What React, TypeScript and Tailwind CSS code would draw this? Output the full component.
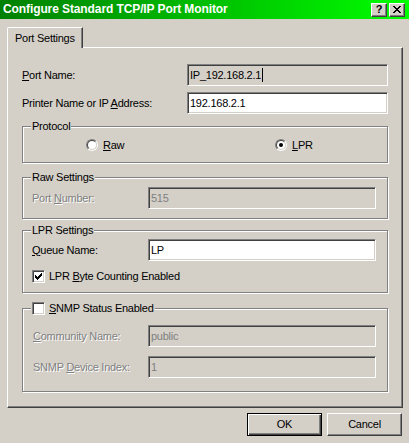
import { ReactNode } from "react";
import clsx from "clsx";

const sunken =
  "border border-t-[#808080] border-l-[#808080] border-r-white border-b-white shadow-[inset_1px_1px_0_#404040,inset_-1px_-1px_0_#d4d0c8]";
const raised =
  "border border-t-white border-l-white border-r-[#404040] border-b-[#404040] shadow-[inset_-1px_-1px_0_#808080]";
const disabledText = "text-[#808080] [text-shadow:1px_1px_0_#fff]";

function Key({ children }: { children: ReactNode }) {
  return <span className="underline underline-offset-[1px] decoration-[1px]">{children}</span>;
}

function Field({
  value,
  width,
  white,
  disabled,
  caret,
}: {
  value: string;
  width: string;
  white?: boolean;
  disabled?: boolean;
  caret?: boolean;
}) {
  return (
    <div
      className={clsx(
        sunken,
        width,
        "h-[22px] flex items-center pl-[2px]",
        white ? "bg-white" : "bg-[#d4d0c8]",
        disabled ? "text-[#808080]" : "text-black"
      )}
    >
      <span>{value}</span>
      {caret && <span className="ml-[1px] w-[1px] h-[14px] bg-black" />}
    </div>
  );
}

function Group({ label, className, children }: { label: ReactNode; className?: string; children?: ReactNode }) {
  return (
    <div className={clsx("relative border border-[#808080] shadow-[inset_1px_1px_0_#fff,1px_1px_0_#fff]", className)}>
      <div className="absolute left-[8px] -top-[7px] h-[13px] bg-[#d4d0c8] px-[1px] flex items-center gap-[4px]">
        {label}
      </div>
      {children}
    </div>
  );
}

function Radio({ checked }: { checked?: boolean }) {
  return (
    <span className="relative inline-block w-[12px] h-[12px] rounded-full border border-t-[#808080] border-l-[#808080] border-r-white border-b-white">
      <span className="absolute inset-0 rounded-full border border-t-[#404040] border-l-[#404040] border-r-[#d4d0c8] border-b-[#d4d0c8] bg-white flex items-center justify-center">
        {checked && <span className="w-[4px] h-[4px] rounded-full bg-black" />}
      </span>
    </span>
  );
}

function Checkbox({ checked }: { checked?: boolean }) {
  const cols = [2, 3, 4, 3, 2, 1, 0];
  return (
    <span className={clsx(sunken, "w-[13px] h-[13px] bg-white flex items-center justify-center shrink-0")}>
      {checked && (
        <svg width="7" height="7" viewBox="0 0 7 7" shapeRendering="crispEdges">
          {cols.map((y, x) => (
            <rect key={x} x={x} y={y} width="1" height="3" fill="#000" />
          ))}
        </svg>
      )}
    </span>
  );
}

function CloseGlyph() {
  const rows = [
    [0, 6],
    [1, 5],
    [2, 4],
    [3, 3],
    [2, 4],
    [1, 5],
    [0, 6],
  ];
  return (
    <svg width="8" height="7" viewBox="0 0 8 7" shapeRendering="crispEdges">
      {rows.map(([a, b], y) =>
        a === b ? (
          <rect key={y} x={a} y={y} width="2" height="1" fill="#000" />
        ) : (
          <g key={y}>
            <rect x={a} y={y} width="2" height="1" fill="#000" />
            <rect x={b} y={y} width="2" height="1" fill="#000" />
          </g>
        )
      )}
    </svg>
  );
}

function TitleBar() {
  return (
    <div className="h-[19px] shrink-0 flex items-center bg-linear-to-r from-[#008000] to-[#00ff00] pl-[3px] pr-[4px]">
      <div className="flex-1 text-white font-bold text-[12px] tracking-[-0.1px]">
        Configure Standard TCP/IP Port Monitor
      </div>
      <div className="flex gap-[2px]">
        <div className={clsx(raised, "w-[16px] h-[14px] bg-[#d4d0c8] flex items-center justify-center text-[11px] font-bold leading-none tracking-normal")}>
          ?
        </div>
        <div className={clsx(raised, "w-[16px] h-[14px] bg-[#d4d0c8] flex items-center justify-center")}>
          <CloseGlyph />
        </div>
      </div>
    </div>
  );
}

function Button({ children, isDefault }: { children: ReactNode; isDefault?: boolean }) {
  return (
    <div
      className={clsx(
        "w-[75px] h-[23px] bg-[#d4d0c8] flex items-center justify-center",
        isDefault
          ? "border border-black shadow-[inset_1px_1px_0_#fff,inset_-1px_-1px_0_#404040,inset_-2px_-2px_0_#808080]"
          : raised
      )}
    >
      {children}
    </div>
  );
}

export default function App() {
  return (
    <div className="w-[409px] h-[443px] bg-[#d4d0c8] flex flex-col overflow-hidden font-['Liberation_Sans',Arial,sans-serif] text-[11px] tracking-[-0.25px] text-black leading-[13px]">
      <TitleBar />
      <div className="flex flex-col pl-[7px] pt-[8px]">
        <div className="relative z-10 -mb-[1px] w-[76px] h-[21px] bg-[#d4d0c8] border-l border-t border-white border-r border-r-[#404040] shadow-[inset_-1px_0_0_#808080] rounded-tl-[2px] flex items-center pl-[7px]">
          Port Settings
        </div>
        <div className="w-[396px] h-[361px] border border-t-white border-l-white border-r-[#404040] border-b-[#404040] shadow-[inset_-1px_-1px_0_#808080] flex flex-col pl-[14px] pt-[16px]">
          <div className="flex items-center">
            <div className="w-[165px]">
              <Key>P</Key>ort Name:
            </div>
            <Field value="IP_192.168.2.1" width="w-[201px]" caret />
          </div>
          <div className="flex items-center mt-[6px]">
            <div className="w-[165px]">
              Printer Name or IP <Key>A</Key>ddress:
            </div>
            <Field value="192.168.2.1" width="w-[201px]" white />
          </div>

          <Group label="Protocol" className="mt-[12px] w-[366px] h-[37px]">
            <div className="h-full flex items-center pl-[63px] pt-[1px]">
              <div className="w-[189px] flex items-center gap-[5px]">
                <Radio />
                <span>
                  <Key>R</Key>aw
                </span>
              </div>
              <div className="flex items-center gap-[5px]">
                <Radio checked />
                <span>
                  <Key>L</Key>PR
                </span>
              </div>
            </div>
          </Group>

          <Group label="Raw Settings" className="mt-[14px] w-[366px] h-[42px]">
            <div className="flex items-center pl-[9px] pt-[9px]">
              <div className={clsx("w-[116px]", disabledText)}>
                Port <Key>N</Key>umber:
              </div>
              <Field value="515" width="w-[228px]" disabled />
            </div>
          </Group>

          <Group label="LPR Settings" className="mt-[11px] w-[366px] h-[63px]">
            <div className="flex items-center pl-[9px] pt-[8px]">
              <div className="w-[116px]">
                <Key>Q</Key>ueue Name:
              </div>
              <Field value="LP" width="w-[228px]" white />
            </div>
            <div className="flex items-center gap-[4px] pl-[9px] mt-[9px]">
              <Checkbox checked />
              <span>
                LPR <Key>B</Key>yte Counting Enabled
              </span>
            </div>
          </Group>

          <Group
            label={
              <>
                <Checkbox />
                <span>
                  <Key>S</Key>NMP Status Enabled
                </span>
              </>
            }
            className="mt-[15px] w-[366px] h-[84px]"
          >
            <div className="flex items-center pl-[10px] pt-[16px]">
              <div className={clsx("w-[115px]", disabledText)}>
                <Key>C</Key>ommunity Name:
              </div>
              <Field value="public" width="w-[228px]" disabled />
            </div>
            <div className="flex items-center pl-[10px] mt-[9px]">
              <div className={clsx("w-[115px]", disabledText)}>
                SNMP <Key>D</Key>evice Index:
              </div>
              <Field value="1" width="w-[228px]" disabled />
            </div>
          </Group>
        </div>

        <div className="w-[396px] flex justify-end gap-[5px] mt-[5px] pr-[1px]">
          <Button isDefault>OK</Button>
          <Button>Cancel</Button>
        </div>
      </div>
    </div>
  );
}
